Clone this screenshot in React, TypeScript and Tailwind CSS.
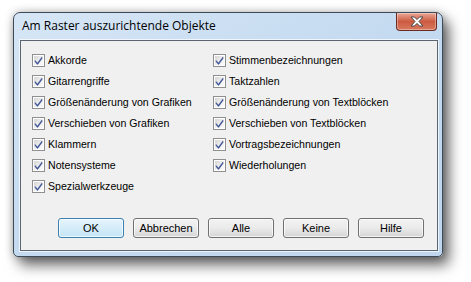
import React from "react";

const leftItems = [
  "Akkorde",
  "Gitarrengriffe",
  "Größenänderung von Grafiken",
  "Verschieben von Grafiken",
  "Klammern",
  "Notensysteme",
  "Spezialwerkzeuge",
];

const rightItems = [
  "Stimmenbezeichnungen",
  "Taktzahlen",
  "Größenänderung von Textblöcken",
  "Verschieben von Textblöcken",
  "Vortragsbezeichnungen",
  "Wiederholungen",
];

const buttons = ["OK", "Abbrechen", "Alle", "Keine", "Hilfe"];

const CheckBox = () => (
  <span className="w-[13px] h-[13px] shrink-0 border border-[#8f8f8f] bg-white p-px">
    <span className="relative block w-full h-full bg-gradient-to-br from-[#d4d4d4] via-[#ededed] to-[#fbfbfb]">
      <svg viewBox="0 0 9 9" className="absolute left-0 top-0 w-[9px] h-[9px]">
        <path
          d="M1.2 4.6 L3.4 7.2 L7.9 1.2 L7.9 2.6 L3.5 8.4 L1.2 5.8 Z"
          fill="#3a55a0"
          stroke="#2a3f86"
          strokeWidth="0.6"
          strokeLinejoin="round"
        />
      </svg>
    </span>
  </span>
);

const Option = ({ label }: { label: string }) => (
  <div className="flex items-center h-[21px] gap-[3px]">
    <CheckBox />
    <span className="text-[10.6px] leading-none text-black">{label}</span>
  </div>
);

const CloseButton = () => (
  <div className="w-[41px] h-[18px] rounded-b-[4px] border border-t-0 border-[#6b2b22] bg-gradient-to-b from-[#e9a898] via-[#cc5a41] to-[#d77a5e] flex items-center justify-center shadow-[inset_0_0_0_1px_rgba(255,255,255,0.35)]">
    <svg viewBox="0 0 14 11" className="w-[14px] h-[11px]">
      <path
        d="M1 1 H4.5 L7 3.6 L9.5 1 H13 L9 5.5 L13 10 H9.5 L7 7.4 L4.5 10 H1 L5 5.5 Z"
        fill="#ffffff"
        stroke="#4a4a4a"
        strokeWidth="1"
        strokeLinejoin="round"
      />
    </svg>
  </div>
);

export default function App() {
  return (
    <div
      className="w-[471px] h-[282px] bg-white pl-[13px] pt-[12px] overflow-hidden"
      style={{ fontFamily: '"Liberation Sans", Arial, sans-serif' }}
    >
      <div className="relative w-[430px] h-[245px] rounded-t-[7px] rounded-b-[5px] border border-[#3d4a57] bg-gradient-to-br from-[#d6e6f6] via-[#c4daf0] to-[#c0d6ee] shadow-[6px_8px_14px_rgba(0,0,0,0.6),0_0_8px_rgba(0,0,0,0.25)] flex flex-col">
        <div className="h-[27px] flex items-start justify-between pl-[8px] pr-[5px]">
          <span
            className="mt-[7px] text-[12px] text-black leading-none"
            style={{ fontFamily: '"Open Sans", "Noto Sans", sans-serif' }}
          >
            Am Raster auszurichtende Objekte
          </span>
          <CloseButton />
        </div>
        <div className="ml-[6px] mr-[4px] h-[211px] border border-[#5c6670] bg-[#f0f0f0] shadow-[0_0_0_1px_rgba(255,255,255,0.7)] flex flex-col">
          <div className="flex pt-[9px] pl-[11px]">
            <div className="w-[181px] flex flex-col">
              {leftItems.map((item) => (
                <Option key={item} label={item} />
              ))}
            </div>
            <div className="flex flex-col">
              {rightItems.map((item) => (
                <Option key={item} label={item} />
              ))}
            </div>
          </div>
          <div className="flex gap-[9px] pl-[37px] mt-[21px]">
            {buttons.map((b, i) => (
              <button
                key={b}
                className={
                  i === 0
                    ? "w-[66px] h-[20px] rounded-[3px] border border-[#3c7fb1] bg-gradient-to-b from-[#e5f4fc] to-[#c4e5f6] text-[11px] text-black shadow-[inset_0_0_0_1px_rgba(255,255,255,0.7)]"
                    : "w-[66px] h-[20px] rounded-[3px] border border-[#707070] bg-gradient-to-b from-[#f2f2f2] via-[#ebebeb] to-[#d5d5d5] text-[11px] text-black shadow-[inset_0_0_0_1px_rgba(255,255,255,0.7)]"
                }
              >
                {b}
              </button>
            ))}
          </div>
        </div>
      </div>
    </div>
  );
}
